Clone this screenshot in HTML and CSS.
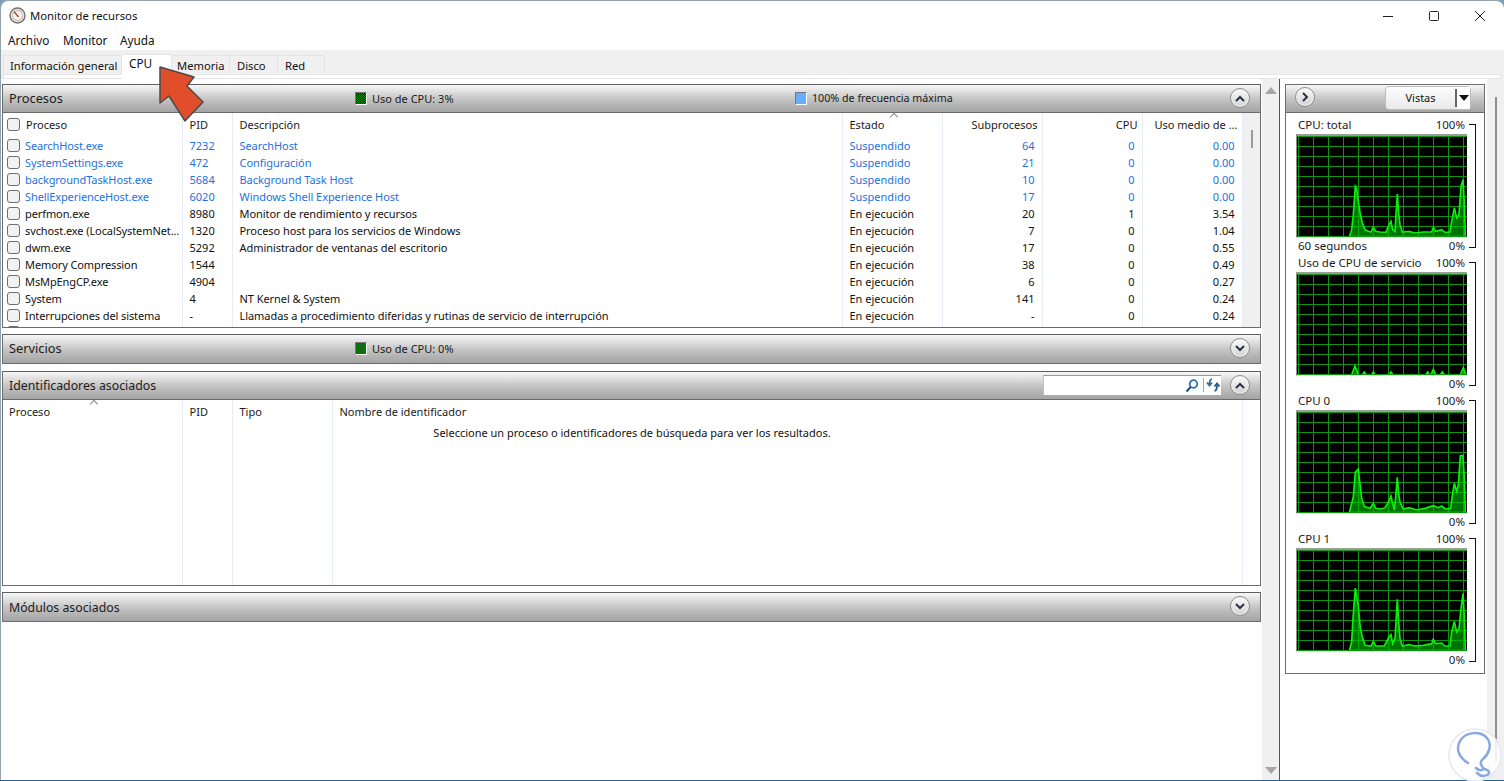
FILE: index.html
```html
<!DOCTYPE html>
<html lang="es">
<head>
<meta charset="utf-8">
<title>Monitor de recursos</title>
<link rel="stylesheet" href="styles.css">
</head>
<body>
<div class="window">
  <header class="titlebar">
    <svg class="appicon" width="17" height="17" viewBox="0 0 17 17"><circle cx="8.5" cy="8.5" r="7.500" fill="#e8e6e2" stroke="#77706c" stroke-width="1.400"/><circle cx="8.5" cy="8.5" r="5" fill="#f8f6f2" stroke="#b9b4ae"/><path d="M5 4.500 9.500 10" stroke="#c8402a" stroke-width="1.500"/></svg>
    <span class="title">Monitor de recursos</span>
    <div class="winbtns">
      <svg width="12" height="12" viewBox="0 0 12 12"><path d="M1 6.500h10" stroke="#222"/></svg>
      <svg width="12" height="12" viewBox="0 0 12 12"><rect x="1.500" y="1.500" width="9" height="9" rx="1" fill="none" stroke="#222"/></svg>
      <svg width="12" height="12" viewBox="0 0 12 12"><path d="M1 1l10 10M11 1 1 11" stroke="#222"/></svg>
    </div>
  </header>
  <nav class="menubar"><span>Archivo</span><span>Monitor</span><span>Ayuda</span></nav>
  <div class="tabstrip">
    <span class="tab t1">Información general</span>
    <span class="tab active">CPU</span>
    <span class="tab t3">Memoria</span>
    <span class="tab t4">Disco</span>
    <span class="tab t5">Red</span>
  </div>
  <main class="main">
    <div class="leftcol">
      <section class="panel">
        <div class="phead">
          <span class="ptitle">Procesos</span>
          <span class="stat s1"><i class="sw green"></i>Uso de CPU: 3%</span>
          <span class="stat s2"><i class="sw blue"></i>100% de frecuencia máxima</span>
          <span class="circ"><svg width="10" height="7" viewBox="0 0 10 7"><path d="M1 6 5 2l4 4" fill="none" stroke="#2b3040" stroke-width="2"/></svg></span>
        </div>
        <div class="tablewrap h1">
          <table class="grid">
            <colgroup><col class="c179"><col class="c50"><col class="c610"><col class="c100"><col class="c100"><col class="c100"><col class="c100"><col></colgroup>
            <thead><tr>
              <th><label class="cell"><i class="chk"></i>Proceso</label></th><th>PID</th><th>Descripción</th><th>Estado</th><th class="r">Subprocesos</th><th class="r">CPU</th><th class="r">Uso medio de ...</th><th></th>
            </tr></thead>
            <tbody>
              <tr class="susp"><td class="p"><label class="cell"><i class="chk"></i>SearchHost.exe</label></td><td>7232</td><td class="d">SearchHost</td><td>Suspendido</td><td class="n">64</td><td class="n">0</td><td class="n">0.00</td><td></td></tr>
              <tr class="susp"><td class="p"><label class="cell"><i class="chk"></i>SystemSettings.exe</label></td><td>472</td><td class="d">Configuración</td><td>Suspendido</td><td class="n">21</td><td class="n">0</td><td class="n">0.00</td><td></td></tr>
              <tr class="susp"><td class="p"><label class="cell"><i class="chk"></i>backgroundTaskHost.exe</label></td><td>5684</td><td class="d">Background Task Host</td><td>Suspendido</td><td class="n">10</td><td class="n">0</td><td class="n">0.00</td><td></td></tr>
              <tr class="susp"><td class="p"><label class="cell"><i class="chk"></i>ShellExperienceHost.exe</label></td><td>6020</td><td class="d">Windows Shell Experience Host</td><td>Suspendido</td><td class="n">17</td><td class="n">0</td><td class="n">0.00</td><td></td></tr>
              <tr><td class="p"><label class="cell"><i class="chk"></i>perfmon.exe</label></td><td>8980</td><td class="d">Monitor de rendimiento y recursos</td><td>En ejecución</td><td class="n">20</td><td class="n">1</td><td class="n">3.54</td><td></td></tr>
              <tr><td class="p"><label class="cell"><i class="chk"></i>svchost.exe (LocalSystemNet...</label></td><td>1320</td><td class="d">Proceso host para los servicios de Windows</td><td>En ejecución</td><td class="n">7</td><td class="n">0</td><td class="n">1.04</td><td></td></tr>
              <tr><td class="p"><label class="cell"><i class="chk"></i>dwm.exe</label></td><td>5292</td><td class="d">Administrador de ventanas del escritorio</td><td>En ejecución</td><td class="n">17</td><td class="n">0</td><td class="n">0.55</td><td></td></tr>
              <tr><td class="p"><label class="cell"><i class="chk"></i>Memory Compression</label></td><td>1544</td><td></td><td>En ejecución</td><td class="n">38</td><td class="n">0</td><td class="n">0.49</td><td></td></tr>
              <tr><td class="p"><label class="cell"><i class="chk"></i>MsMpEngCP.exe</label></td><td>4904</td><td></td><td>En ejecución</td><td class="n">6</td><td class="n">0</td><td class="n">0.27</td><td></td></tr>
              <tr><td class="p"><label class="cell"><i class="chk"></i>System</label></td><td>4</td><td class="d">NT Kernel &amp; System</td><td>En ejecución</td><td class="n">141</td><td class="n">0</td><td class="n">0.24</td><td></td></tr>
              <tr><td class="p"><label class="cell"><i class="chk"></i>Interrupciones del sistema</label></td><td>-</td><td class="d">Llamadas a procedimiento diferidas y rutinas de servicio de interrupción</td><td>En ejecución</td><td class="n">-</td><td class="n">0</td><td class="n">0.24</td><td></td></tr>
              <tr><td class="p"><label class="cell"><i class="chk"></i></label></td><td></td><td></td><td></td><td></td><td></td><td></td><td></td></tr>
            </tbody>
          </table>
          <i class="caret ca1"></i>
          <div class="sbar"><i class="thumb"></i></div>
        </div>
      </section>
      <section class="panel collapsed">
        <div class="phead">
          <span class="ptitle">Servicios</span>
          <span class="stat s1"><i class="sw green2"></i>Uso de CPU: 0%</span>
          <span class="circ"><svg width="10" height="7" viewBox="0 0 10 7"><path d="M1 1l4 4 4-4" fill="none" stroke="#2b3040" stroke-width="2"/></svg></span>
        </div>
      </section>
      <section class="panel">
        <div class="phead">
          <span class="ptitle sm">Identificadores asociados</span>
          <span class="search">
            <svg class="glass" width="14" height="14" viewBox="0 0 14 14"><circle cx="8.500" cy="5" r="3.800" fill="none" stroke="#2a6cb0" stroke-width="1.700"/><path d="M5.700 8 1.500 12.500" stroke="#1f5590" stroke-width="2.200"/></svg>
          </span>
          <span class="refresh"><svg width="15" height="14" viewBox="0 0 15 14"><path d="M6 1C4 1.500 3.500 3 3.500 6M1 4.500 3.500 7.500 6 4.500" fill="none" stroke="#2a6cb0" stroke-width="1.800"/><path d="M8.500 13C10.500 12.500 11 10 11 7.500M8.500 8.500 11 5.500 13.500 8.500" fill="none" stroke="#1f5590" stroke-width="1.800"/></svg></span>
          <span class="circ"><svg width="10" height="7" viewBox="0 0 10 7"><path d="M1 6 5 2l4 4" fill="none" stroke="#2b3040" stroke-width="2"/></svg></span>
        </div>
        <div class="tablewrap h2">
          <table class="grid full">
            <colgroup><col class="c179"><col class="c50"><col class="c100"><col class="c910"><col></colgroup>
            <thead><tr><th>Proceso</th><th>PID</th><th>Tipo</th><th>Nombre de identificador</th><th class="sb0"></th></tr></thead>
            <tbody><tr class="fill"><td></td><td></td><td></td><td></td><td class="sb0"></td></tr></tbody>
          </table>
          <i class="caret ca2"></i>
          <p class="hint">Seleccione un proceso o identificadores de búsqueda para ver los resultados.</p>
        </div>
      </section>
      <section class="panel collapsed">
        <div class="phead">
          <span class="ptitle sm">Módulos asociados</span>
          <span class="circ"><svg width="10" height="7" viewBox="0 0 10 7"><path d="M1 1l4 4 4-4" fill="none" stroke="#2b3040" stroke-width="2"/></svg></span>
        </div>
      </section>
    </div>
    <div class="vscroll">
      <svg width="12" height="7" viewBox="0 0 12 7"><path d="M6 0l6 7H0z" fill="#a6a6a6"/></svg>
      <svg width="12" height="7" viewBox="0 0 12 7"><path d="M6 7 0 0h12z" fill="#a6a6a6"/></svg>
    </div>
    <aside class="rightcol">
      <section class="gpanel">
        <div class="ghead">
          <span class="circ"><svg width="7" height="10" viewBox="0 0 7 10"><path d="M1 1l4 4-4 4" fill="none" stroke="#2b3040" stroke-width="2"/></svg></span>
          <span class="vistas"><span class="vlabel">Vistas</span><span class="vdrop"><svg width="10" height="6" viewBox="0 0 10 6"><path d="M0 0h10L5 6z" fill="#111"/></svg></span></span>
        </div>
        <div class="charts">
          <div class="chart">
            <div class="lbls"><span>CPU: total</span><span>100%</span></div>
            <div class="plot">
              <svg width="170" height="100" viewBox="36 64 510 300"><path class="area" d="M193 366 200 345 205 300 211 215 215 222 220 262 226 300 232 325 240 345 250 350 258 352 265 338 272 350 285 352 303 353 312 330 318 320 323 345 330 350 333 300 337 238 341 295 345 330 352 352 372 350 390 355 415 352 440 352 445 338 452 350 470 345 480 353 495 352 500 320 508 280 515 310 522 300 528 215 534 195 538 265 541 366Z"/></svg>
            </div>
            <div class="lbls low"><span>60 segundos</span><span>0%</span></div>
          </div>
          <div class="chart">
            <div class="lbls"><span>Uso de CPU de servicio</span><span>100%</span></div>
            <div class="plot">
              <svg width="170" height="100" viewBox="36 64 510 300"><path class="area" d="M200 366 210 340 220 366ZM232 366 238 358 244 366ZM260 366 265 358 270 366ZM313 366 318 358 324 366ZM422 366 428 358 434 366ZM438 366 445 350 452 366ZM466 366 472 358 478 366ZM526 366 535 345 543 366Z"/></svg>
            </div>
            <div class="lbls low"><span></span><span>0%</span></div>
          </div>
          <div class="chart">
            <div class="lbls"><span>CPU 0</span><span>100%</span></div>
            <div class="plot">
              <svg width="170" height="100" viewBox="36 64 510 300"><path class="area" d="M193 366 200 338 205 318 211 245 220 235 224 273 230 323 238 348 255 353 265 338 272 353 288 355 300 351 312 331 318 316 323 338 328 358 333 308 337 260 341 308 345 335 355 355 372 351 395 358 420 353 445 345 460 351 470 346 482 355 497 353 502 313 508 278 515 303 520 283 526 195 534 195 538 263 541 366Z"/></svg>
            </div>
            <div class="lbls low"><span></span><span>0%</span></div>
          </div>
          <div class="chart">
            <div class="lbls"><span>CPU 1</span><span>100%</span></div>
            <div class="plot">
              <svg width="170" height="100" viewBox="36 64 510 300"><path class="area" d="M193 366 200 340 205 255 211 178 215 205 220 232 226 300 232 325 240 350 258 352 265 338 272 352 298 352 312 325 318 318 323 345 330 330 333 280 337 212 341 280 345 330 352 352 372 348 390 352 415 350 440 345 445 332 452 345 470 343 480 352 495 352 500 310 508 278 515 310 522 300 528 240 534 195 538 265 541 366Z"/></svg>
            </div>
            <div class="lbls low"><span></span><span>0%</span></div>
          </div>
        </div>
      </section>
    </aside>
    <div class="rscroll"><i class="rthumb"></i></div>
  </main>
</div>
<svg class="arrow" width="48" height="60" viewBox="0 0 48 60"><path d="M2 2 36 12 29 21 45 37 27 56 11 31 2 38Z" fill="#e04e2b" stroke="#4b4b4b" stroke-width="1.500" stroke-linejoin="round"/></svg>
<svg class="mark" width="54" height="54" viewBox="0 0 54 54"><circle cx="27" cy="27" r="26" fill="#fff" fill-opacity=".85" stroke="#e6e9f2" stroke-width="1.500"/><path d="M20 35C12 30 7 22 12 13 18 3 33 3 39 10 45 17 40 27 35 31 31 34 33 38 36 41 41 42 43 45 39 47 35 49 31 47 29 45M36 41C33 43 30 42 28 40" fill="none" stroke="#8aa8e0" stroke-width="2.500" stroke-linecap="round"/></svg>
</body>
</html>
```

FILE: styles.css
```css
* { box-sizing: border-box; }
html, body { margin: 0; height: 100%; }
body {
  background: linear-gradient(#7f9fb4, #2a5f96);
  overflow: hidden;
  font-family: "Noto Sans", "Open Sans", sans-serif;
  font-size: 11px;
  color: #111;
  position: relative;
}
.window {
  height: 780px;
  background: #fff;
  border-radius: 8px 8px 0 0;
  border-top: 1px solid #93a3ae;
  border-left: 1px solid #93a3ae;
  display: flex;
  flex-direction: column;
  overflow: hidden;
}
.titlebar {
  height: 29px;
  flex: none;
  display: flex;
  align-items: center;
  padding-left: 8px;
}
.appicon { margin-right: 4px; }
.title { font-size: 11.300px; }
.winbtns {
  margin-left: auto;
  display: flex;
  gap: 34px;
  padding-right: 18px;
}
.menubar {
  height: 20px;
  flex: none;
  display: flex;
  align-items: center;
  padding-left: 7px;
  font-size: 11.800px;
}
.menubar span:nth-child(1) { width: 55px; }
.menubar span:nth-child(2) { width: 57px; }
.tabstrip {
  height: 29px;
  flex: none;
  background: #f0f0f0;
  display: flex;
  align-items: flex-start;
  padding: 5px 0 0 2px;
  position: relative;
  font-size: 11.200px;
}
.tabstrip::after {
  content: "";
  position: absolute;
  left: 2px; right: 3px; bottom: 0;
  height: 3px;
  background: #fff;
  border: 1px solid #e6e6e6;
}
.tab {
  height: 21px;
  line-height: 20px;
  border: 1px solid #e4e4e4;
  border-left: 0;
  border-bottom: 0;
  text-align: left;
  padding-left: 7px;
  background: #f0f0f0;
}
.t1 { width: 119px; border-left: 1px solid #e4e4e4; padding-left: 6px; }
.t3 { width: 58px; padding-left: 5px; }
.t4 { width: 48px; }
.t5 { width: 47px; }
.active {
  width: 50px;
  height: 25px;
  margin-top: -1px;
  background: #fff;
  position: relative;
  z-index: 1;
  padding-left: 7px;
  line-height: 16px;
  font-size: 11.800px;
}
.main {
  flex: 1;
  display: flex;
  min-height: 0;
  background: #fff;
}
.leftcol {
  width: 1260px;
  flex: none;
  padding: 5px 0 0 1px;
  display: flex;
  flex-direction: column;
  gap: 6px;
}
.panel {
  border: 1px solid #6c6c6c;
  border-top-color: #5f5f5f;
  flex: none;
  background: #fff;
}
.collapsed { margin-bottom: 1px; }
.phead {
  height: 28px;
  background: linear-gradient(#f7f7f7 0%, #e2e2e2 22%, #c6c6c6 50%, #b2b2b2 78%, #a4a4a4 100%);
  border-bottom: 1px solid #6c6c6c;
  display: flex;
  align-items: center;
  position: relative;
  padding: 0 0 2px 6px;
}
.collapsed .phead { border-bottom: 0; }
.ptitle { font-size: 12.800px; color: #1c1c1c; }
.ptitle.sm { font-size: 12.300px; margin-top: 2px; }
.stat {
  position: absolute;
  top: -1px;
  height: 28px;
  display: flex;
  align-items: center;
  gap: 5px;
  font-size: 11px;
  color: #1a1a1a;
}
.s1 { left: 352px; }
.s2 { left: 792px; font-size: 10.700px; }
.sw { width: 12px; height: 13px; display: block; border: 1px solid #fff; border-top-color: #777; border-left-color: #777; }
.green { background: repeating-conic-gradient(#0c8a0c 0 25%, #062006 0 50%) 0 0 / 2px 2px; }
.green2 { background: #0f6f0f; }
.blue { background: #66aefc; }
.circ {
  width: 20px;
  height: 20px;
  border-radius: 50%;
  border: 1px solid #8d8d8d;
  background: linear-gradient(#fbfbfb, #d2d2d2);
  box-shadow: inset 0 0 0 1px #f4f4f4;
  display: flex;
  align-items: center;
  justify-content: center;
  position: absolute;
  right: 10px;
  top: 3px;
}
.tablewrap { position: relative; overflow: hidden; }
.h1 { height: 214px; }
.h2 { height: 185px; }
.grid {
  border-collapse: collapse;
  table-layout: fixed;
  width: 100%;
  font-size: 11px;
}
.c179 { width: 179px; }
.c50 { width: 50px; }
.c100 { width: 100px; }
.c610 { width: 610px; }
.c910 { width: 910px; }
.grid th {
  font-weight: 400;
  height: 24px;
  text-align: left;
  padding: 0 4px 2px 7px;
  border-right: 1px solid #e6edf8;
  white-space: nowrap;
  overflow: hidden;
  color: #1a1a1a;
}
.grid th:first-child { padding-left: 6px; }
.grid th.r { text-align: right; }
.grid td {
  height: 17px;
  padding: 0 5px 0 7px;
  border-right: 1px solid #e6edf8;
  white-space: nowrap;
  overflow: hidden;
  line-height: 17px;
}
.grid td.n { text-align: right; padding-right: 7px; }
.grid td.p { letter-spacing: -.1px; padding-left: 6px; }
.grid td.p .cell { gap: 5px; }
.grid td.d { letter-spacing: -.06px; }
.grid tr.susp td { color: #1b72e0; }
.grid th.sb0, .grid td.sb0 { border-right: 0; }
.sbar { position: absolute; right: 0; top: 0; bottom: 0; width: 17px; background: #f0f0f0; }
.thumb { position: absolute; left: 8px; top: 17px; width: 2px; height: 18px; background: #9a9a9a; display: block; }
.cell { display: flex; align-items: center; gap: 6px; margin-left: -2px; }
.chk {
  width: 13px;
  height: 13px;
  flex: none;
  border: 1px solid #6e6e6e;
  border-radius: 3px;
  background: #f2f2f2;
  display: block;
}
.full { height: 185px; }
.full tr.fill td { height: 161px; }
.caret {
  position: absolute;
  width: 6px;
  height: 6px;
  border-top: 1px solid #8c8c8c;
  border-left: 1px solid #8c8c8c;
  transform: rotate(45deg);
}
.ca1 { left: 888px; top: 1px; }
.ca2 { left: 88px; top: 1px; }
.hint {
  position: absolute;
  left: 0; right: 0; top: 24px;
  margin: 0;
  height: 17px;
  line-height: 17px;
  text-align: center;
  padding-left: 1px;
}
.search {
  position: absolute;
  left: 1040px;
  top: 3px;
  width: 178px;
  height: 20px;
  background: #fff;
  border-top: 1px solid #9a9a9a;
  border-left: 1px solid #c0c0c0;
  display: flex;
  align-items: center;
  justify-content: flex-end;
  padding-right: 22px;
}
.glass { display: block; }
.refresh {
  position: absolute;
  left: 1200px;
  top: 6px;
  width: 18px;
  height: 14px;
  border-left: 1px solid #aaa;
  padding-left: 2px;
  display: flex;
}
.vscroll {
  width: 17px;
  flex: none;
  background: #f0f0f0;
  display: flex;
  flex-direction: column;
  justify-content: space-between;
  align-items: center;
  padding: 8px 0 6px;
  border-right: 1px solid #555;
  margin-left: 1px;
  box-sizing: content-box;
}
.rightcol { width: 207px; flex: none; padding: 5px 0 0 5px; }
.gpanel { width: 200px; height: 590px; border: 1px solid #6c6c6c; }
.ghead {
  height: 28px;
  background: linear-gradient(#f7f7f7 0%, #e2e2e2 22%, #c6c6c6 50%, #b2b2b2 78%, #a4a4a4 100%);
  border-bottom: 1px solid #6c6c6c;
  position: relative;
}
.ghead .circ { left: 9px; right: auto; top: 2px; }
.vistas {
  position: absolute;
  left: 99px;
  top: 1px;
  width: 86px;
  height: 24px;
  border: 1px solid #bdbdbd;
  border-radius: 4px;
  background: linear-gradient(#fdfdfd, #eaeaea);
  display: flex;
  font-size: 11px;
}
.vlabel { width: 71px; text-align: center; border-right: 2px solid #666; margin: 2px 0; line-height: 18px; }
.vdrop { flex: 1; display: flex; align-items: center; justify-content: center; background: #fff; }
.charts { padding-top: 4px; }
.chart {
  height: 138px;
  padding: 0 0 0 10px;
  position: relative;
}
.chart::after {
  content: "";
  position: absolute;
  left: 183px;
  top: 7px;
  width: 6px;
  height: 122px;
  border: 1px solid #111;
  border-left: 0;
}
.lbls {
  display: flex;
  justify-content: space-between;
  width: 169px;
  height: 17px;
  line-height: 15px;
  font-size: 11.500px;
  padding-left: 2px;
  color: #1a1a1a;
}
.low { height: 16px; line-height: 16px; }
.plot {
  width: 171px;
  height: 104px;
  border: 1px solid;
  border-width: 2px 0 1px 1px;
  border-color: #9b9b9b #c4c4c4 #e4e4e4 #8c8c8c;
  background-color: #000;
  background-image:
    linear-gradient(#0c960c 1px, transparent 1px),
    linear-gradient(90deg, #0c960c 1px, transparent 1px);
  background-size: 15px 10px;
  background-position: 1px 0;
  overflow: hidden;
}
.plot svg { display: block; }
.area { fill: rgba(0, 190, 0, .6); stroke: #0bf00b; stroke-width: 5; stroke-linejoin: miter; }
.rscroll {
  flex: 1;
  background: #f0f0f0;
  position: relative;
}
.rthumb {
  position: absolute;
  left: 8px;
  top: 18px;
  width: 2px;
  height: 665px;
  background: #8f8f8f;
  display: block;
}
.arrow { position: absolute; left: 158px; top: 65px; z-index: 5; }
.mark { position: absolute; left: 1448px; top: 728px; z-index: 5; }
```
